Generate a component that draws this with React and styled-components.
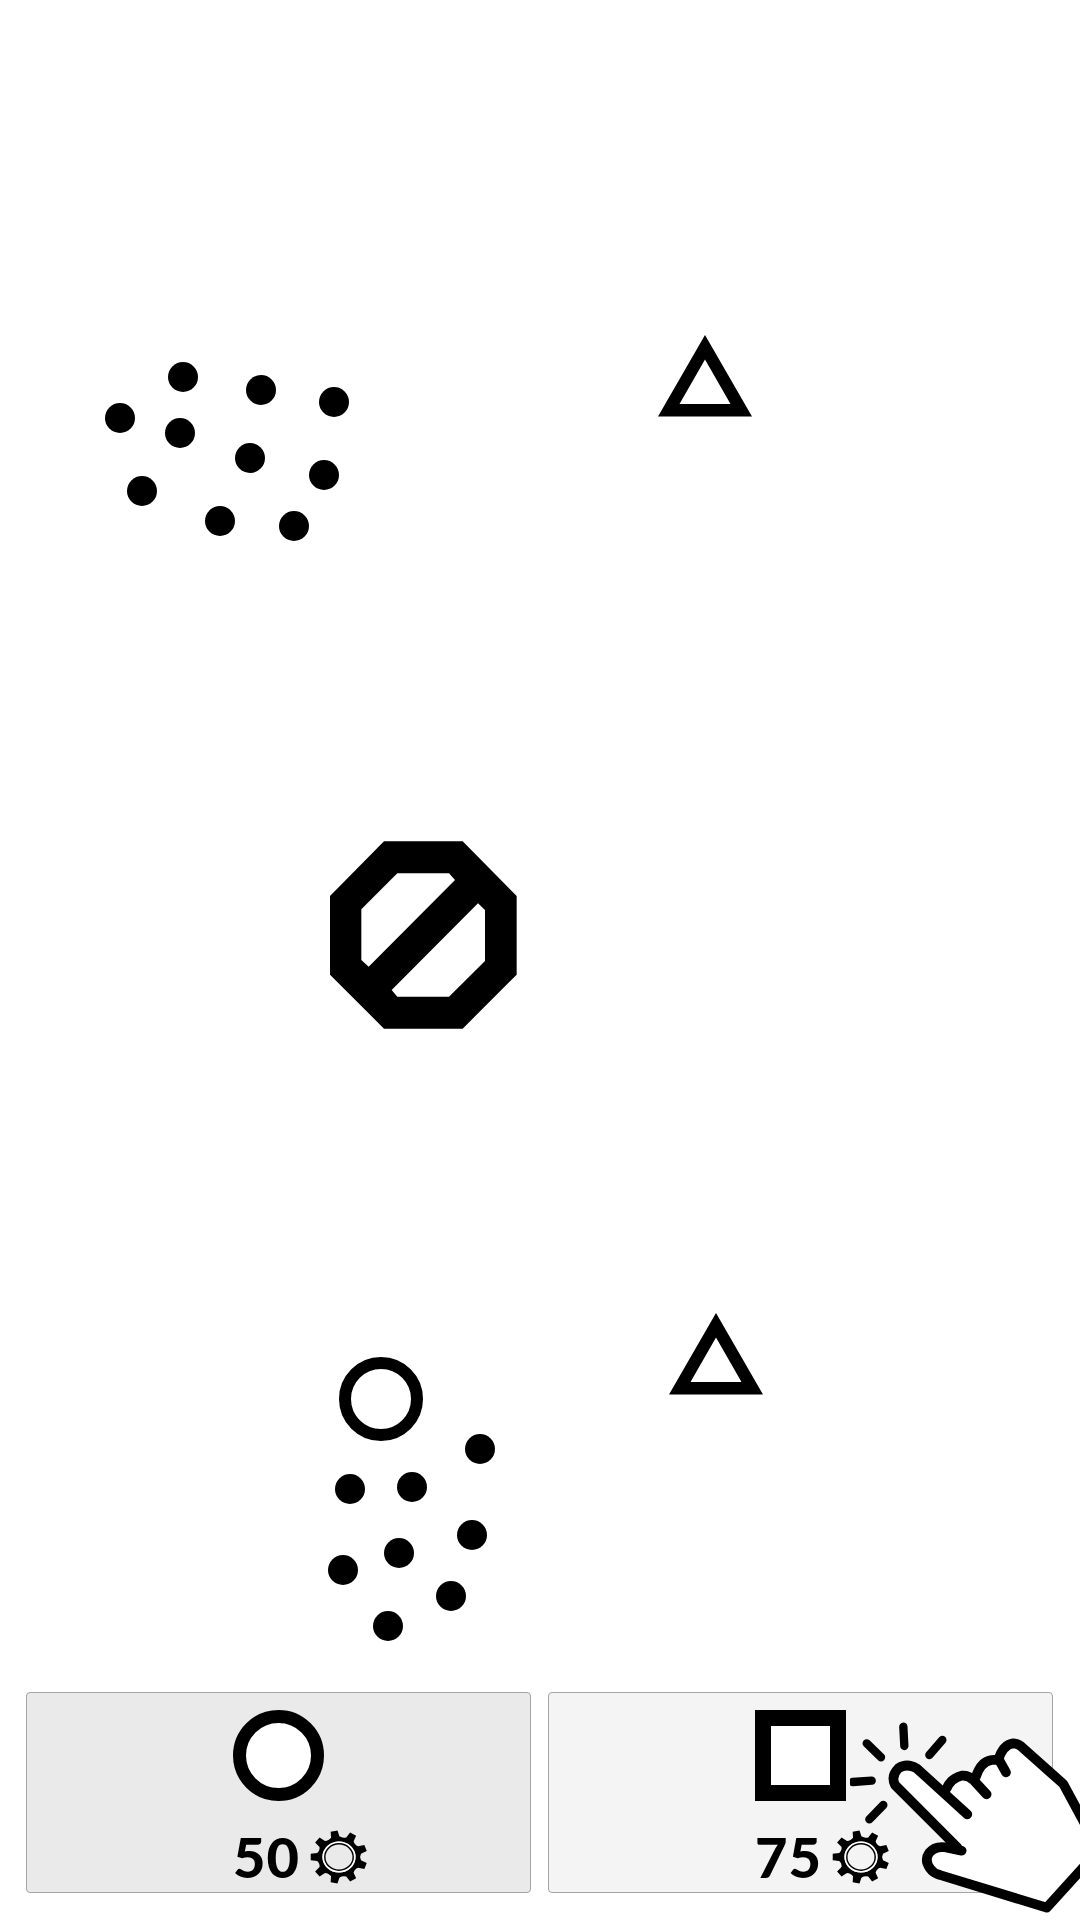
import React from "react";
import styled, { createGlobalStyle } from "styled-components";

const GlobalStyle = createGlobalStyle`
  html, body {
    margin: 0;
    padding: 0;
    background: #fff;
  }
`;

const Page = styled.div`
  position: relative;
  display: flex;
  flex-direction: column;
  width: 1080px;
  height: 1920px;
  overflow: hidden;
  background: #fff;
  font-family: "Lato", "Open Sans", sans-serif;
`;

const Board = styled.div`
  position: relative;
  flex: 1;
`;

const Dot = styled.span`
  position: absolute;
  left: ${(p) => p.$x - 15}px;
  top: ${(p) => p.$y - 15}px;
  width: 30px;
  height: 30px;
  border-radius: 50%;
  background: #000;
`;

const Ring = styled.span`
  position: absolute;
  left: 339px;
  top: 1357px;
  width: 60px;
  height: 60px;
  border: 12px solid #000;
  border-radius: 50%;
`;

const Figure = styled.svg`
  position: absolute;
  left: ${(p) => p.$x}px;
  top: ${(p) => p.$y}px;
`;

const Choices = styled.div`
  display: flex;
  gap: 17px;
  padding: 0 27px 27px 26px;
`;

const Choice = styled.button`
  display: flex;
  flex-direction: column;
  align-items: center;
  justify-content: flex-start;
  flex: 0 0 505px;
  height: 201px;
  box-sizing: border-box;
  margin: 0;
  padding: 17px 0 0;
  border: 1px solid #a4a4a4;
  border-radius: 4px;
  background: ${(p) => p.$bg};
  font: inherit;
  color: #000;
`;

const Stack = styled.div`
  display: flex;
  flex-direction: column;
  width: 91px;
`;

const RoundIcon = styled.div`
  box-sizing: border-box;
  width: 91px;
  height: 91px;
  border: 13px solid #000;
  border-radius: 50%;
  background: #fff;
`;

const SquareIcon = styled.div`
  box-sizing: border-box;
  width: 91px;
  height: 91px;
  border: 16px solid #000;
  background: #fff;
`;

const Cost = styled.div`
  display: flex;
  align-items: center;
  width: 140px;
  height: 54px;
  margin-top: 29px;
`;

const Amount = styled.span`
  width: 77px;
  font-size: 56px;
  font-weight: 900;
  line-height: 54px;
  letter-spacing: 1px;
  text-align: left;
`;

const Hand = styled.svg`
  position: absolute;
  right: 0;
  bottom: 0;
`;

const firstDots = [
  [182.7, 376.7], [261, 389.7], [334, 402.3], [120, 417.7], [180.3, 432.7],
  [250, 457.7], [324.3, 474.7], [142, 491.3], [220.3, 520.7], [294, 525.7],
];

const secondDots = [
  [480, 1448.7], [349.7, 1489.3], [412, 1487], [472, 1535],
  [399, 1552.7], [343, 1570.3], [451, 1596], [388, 1626.3],
];

// nine teeth, the first one just left of straight up
const gearPath = () => {
  const pt = (r, deg) => {
    const a = (deg * Math.PI) / 180;
    return `${(28 + r * Math.cos(a)).toFixed(2)} ${(28 + r * Math.sin(a)).toFixed(2)}`;
  };
  let d = "";
  for (let i = 0; i < 9; i++) {
    const c = -100 + i * 40;
    d += `${i === 0 ? "M" : "L"}${pt(21.5, c - 11)} L${pt(27.5, c - 7)} L${pt(27.5, c + 7)} L${pt(21.5, c + 11)} `;
    d += `Q${pt(19.5, c + 20)} ${pt(21.5, c + 29)} `;
  }
  return d + "Z M28 12 A16 16 0 1 0 28 44 A16 16 0 1 0 28 12 Z";
};

const Gear = () => (
  <svg width="58" height="54" viewBox="0 0 56 56" preserveAspectRatio="none">
    <path d={gearPath()} fill="#000" fillRule="evenodd" />
    <circle cx="28" cy="28" r="15.2" fill="none" stroke="#fff" strokeWidth="1.6" />
    <circle cx="28" cy="28" r="13.7" fill="none" stroke="#000" strokeWidth="1.4" />
  </svg>
);

const Triangle = ({ x, y }) => (
  <Figure $x={x} $y={y} width="100" height="90" viewBox="0 0 100 90">
    <path
      d="M50 0 L97 81.5 L3 81.5 Z M50 24.5 L24.5 69 L75.5 69 Z"
      fill="#000"
      fillRule="evenodd"
    />
  </Figure>
);

export default function App() {
  return (
    <Page>
      <GlobalStyle />
      <Board>
        {firstDots.map(([x, y]) => (
          <Dot key={`${x}-${y}`} $x={x} $y={y} />
        ))}
        <Triangle x={655} y={335} />

        <Figure $x={300} $y={820} width="240" height="220" viewBox="0 0 720 660">
          <path
            d="M252 64 L488 64 L650 228 L650 464 L488 626 L252 626 L90 464 L90 228 Z
               M292 160 L184 268 L184 420 L206 440 L465 180 L447 160 Z
               M534 250 L275 510 L292 530 L447 530 L555 423 L555 270 Z"
            fill="#000"
            fillRule="evenodd"
          />
        </Figure>

        <Triangle x={666} y={1313} />
        <Ring />
        {secondDots.map(([x, y]) => (
          <Dot key={`${x}-${y}`} $x={x} $y={y} />
        ))}
      </Board>

      <Choices>
        <Choice $bg="#eaeaea">
          <Stack>
            <RoundIcon />
            <Cost>
              <Amount>50</Amount>
              <Gear />
            </Cost>
          </Stack>
        </Choice>
        <Choice $bg="#f4f4f4">
          <Stack>
            <SquareIcon />
            <Cost>
              <Amount>75</Amount>
              <Gear />
            </Cost>
          </Stack>
        </Choice>
      </Choices>

      <Hand width="230" height="210" viewBox="0 0 690 630">
        <path
          d="M335 422 L285 412 Q255 408 238 428 Q222 450 240 475 Q250 490 270 495 L590 593 L720 450 L720 370 L640 222 L520 115 Q490 90 460 115 L445 150 Q400 140 375 200 Q330 180 290 235 L200 175 Q170 155 145 175 Q120 200 135 225 Z"
          fill="#fff"
        />
        <g fill="none" stroke="#000" strokeLinecap="round" strokeLinejoin="round">
          <g strokeWidth="29">
            <path d="M335 422 L285 412 Q255 408 238 428 Q222 450 240 475 Q250 490 270 495 L590 593 L720 450" />
            <path d="M322 412 L135 225 Q122 198 145 175 Q170 158 200 175 L352 313" />
            <path d="M290 235 Q303 205 335 197 Q355 195 370 210 L410 253" />
            <path d="M378 200 Q392 155 425 150 Q445 148 450 155 L468 187" />
            <path d="M445 150 Q458 105 490 100 Q505 100 520 115 L640 222 L720 370" />
          </g>
          <g strokeWidth="25">
            <path d="M160 50 L163 108" />
            <path d="M277 90 L238 135" />
            <path d="M50 100 L93 142" />
            <path d="M8 216 L65 212" />
            <path d="M100 285 L58 328" />
          </g>
        </g>
      </Hand>
    </Page>
  );
}
